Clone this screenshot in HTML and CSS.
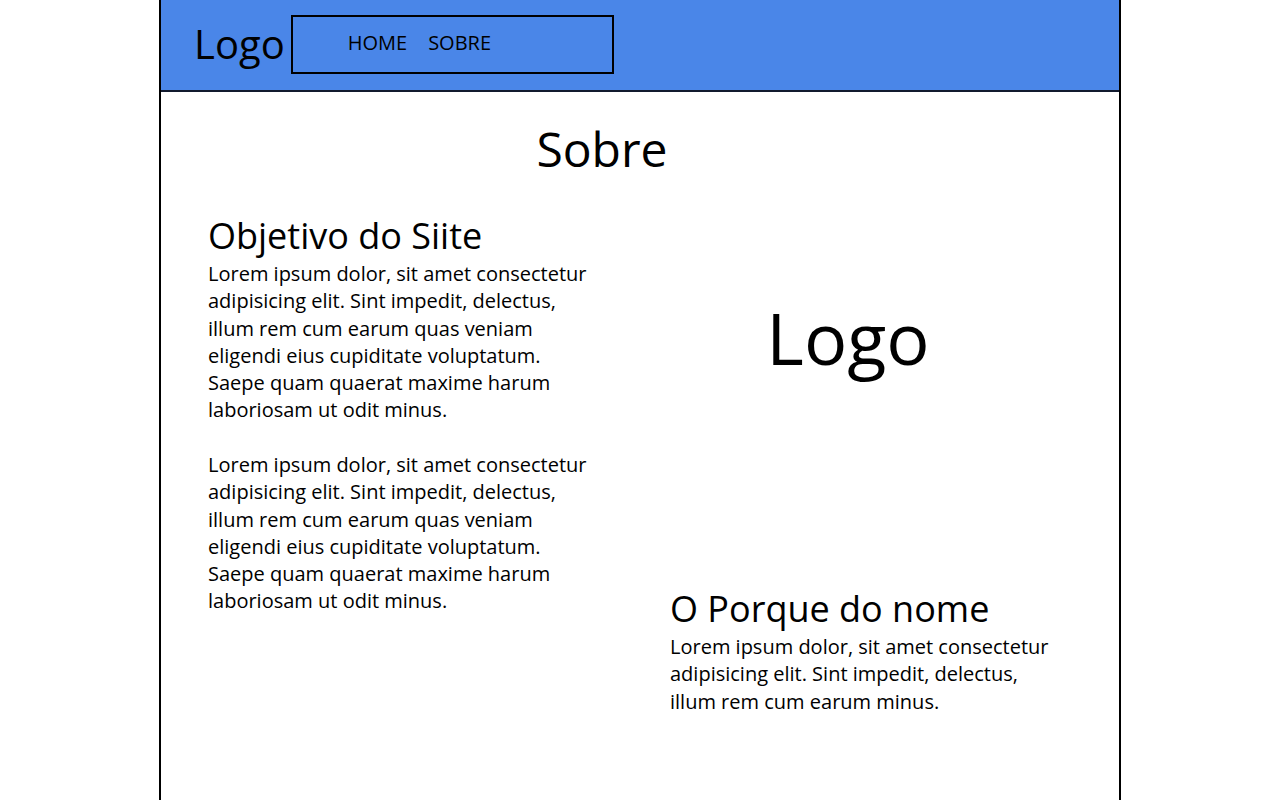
FILE: index.html
```html
<!DOCTYPE html>
<html lang="pt">
<head>
<meta charset="utf-8">
<title>Sobre</title>
<link rel="stylesheet" href="styles.css">
</head>
<body>
<div class="page">
  <header class="header">
    <div class="brand">Logo</div>
    <nav class="nav">
      <a href="#" class="nav-link">HOME</a>
      <a href="#" class="nav-link">SOBRE</a>
    </nav>
  </header>
  <main class="main">
    <h1 class="title">Sobre</h1>
    <div class="columns">
      <section class="col-left">
        <h2 class="subtitle">Objetivo do Siite</h2>
        <p class="text">Lorem ipsum dolor, sit amet consectetur adipisicing elit. Sint impedit, delectus, illum rem cum earum quas veniam eligendi eius cupiditate voluptatum. Saepe quam quaerat maxime harum laboriosam ut odit minus.</p>
        <p class="text">Lorem ipsum dolor, sit amet consectetur adipisicing elit. Sint impedit, delectus, illum rem cum earum quas veniam eligendi eius cupiditate voluptatum. Saepe quam quaerat maxime harum laboriosam ut odit minus.</p>
      </section>
      <section class="col-right">
        <div class="big-logo">Logo</div>
        <h2 class="subtitle">O Porque do nome</h2>
        <p class="text">Lorem ipsum dolor, sit amet consectetur adipisicing elit. Sint impedit, delectus, illum rem cum earum minus.</p>
      </section>
    </div>
  </main>
</div>
</body>
</html>
```

FILE: styles.css
```css
* { box-sizing: border-box; }
html, body { margin: 0; padding: 0; }
body {
  font-family: "Open Sans", "Liberation Sans", sans-serif;
  color: #000;
  background: #fff;
}
.page {
  width: 962px;
  height: 800px;
  margin: 0 auto;
  border-left: 2px solid #000;
  border-right: 2px solid #000;
}
.header {
  height: 92px;
  background: #4a86e8;
  border-bottom: 2px solid #111a2e;
  display: flex;
  align-items: flex-start;
  padding-left: 33px;
}
.brand {
  font-size: 40px;
  line-height: 54px;
  margin-top: 17px;
}
.nav {
  margin-left: 6px;
  margin-top: 15px;
  width: 323px;
  height: 59px;
  border: 2px solid #000;
  display: flex;
  align-items: center;
  gap: 21px;
  padding-left: 55px;
  padding-bottom: 4px;
}
.nav-link {
  color: #000;
  text-decoration: none;
  font-size: 20px;
  line-height: 27px;
}
.main {
  padding: 0 47px;
}
.title {
  margin: 24px 76px 0 0;
  font-size: 48px;
  font-weight: 400;
  line-height: 65px;
  text-align: center;
}
.columns {
  display: grid;
  grid-template-columns: 462px 1fr;
  margin-top: 30px;
}
.subtitle {
  margin: 0;
  font-size: 36px;
  font-weight: 400;
  line-height: 49px;
}
.text {
  margin: 0 0 27.5px;
  font-size: 20px;
  line-height: 27.25px;
}
.col-left .text { width: 390px; }
.col-right .text { width: 390px; }
.big-logo {
  font-size: 72px;
  line-height: 98px;
  text-align: center;
  padding-right: 46px;
  margin: 77px 0 198px;
}
```
